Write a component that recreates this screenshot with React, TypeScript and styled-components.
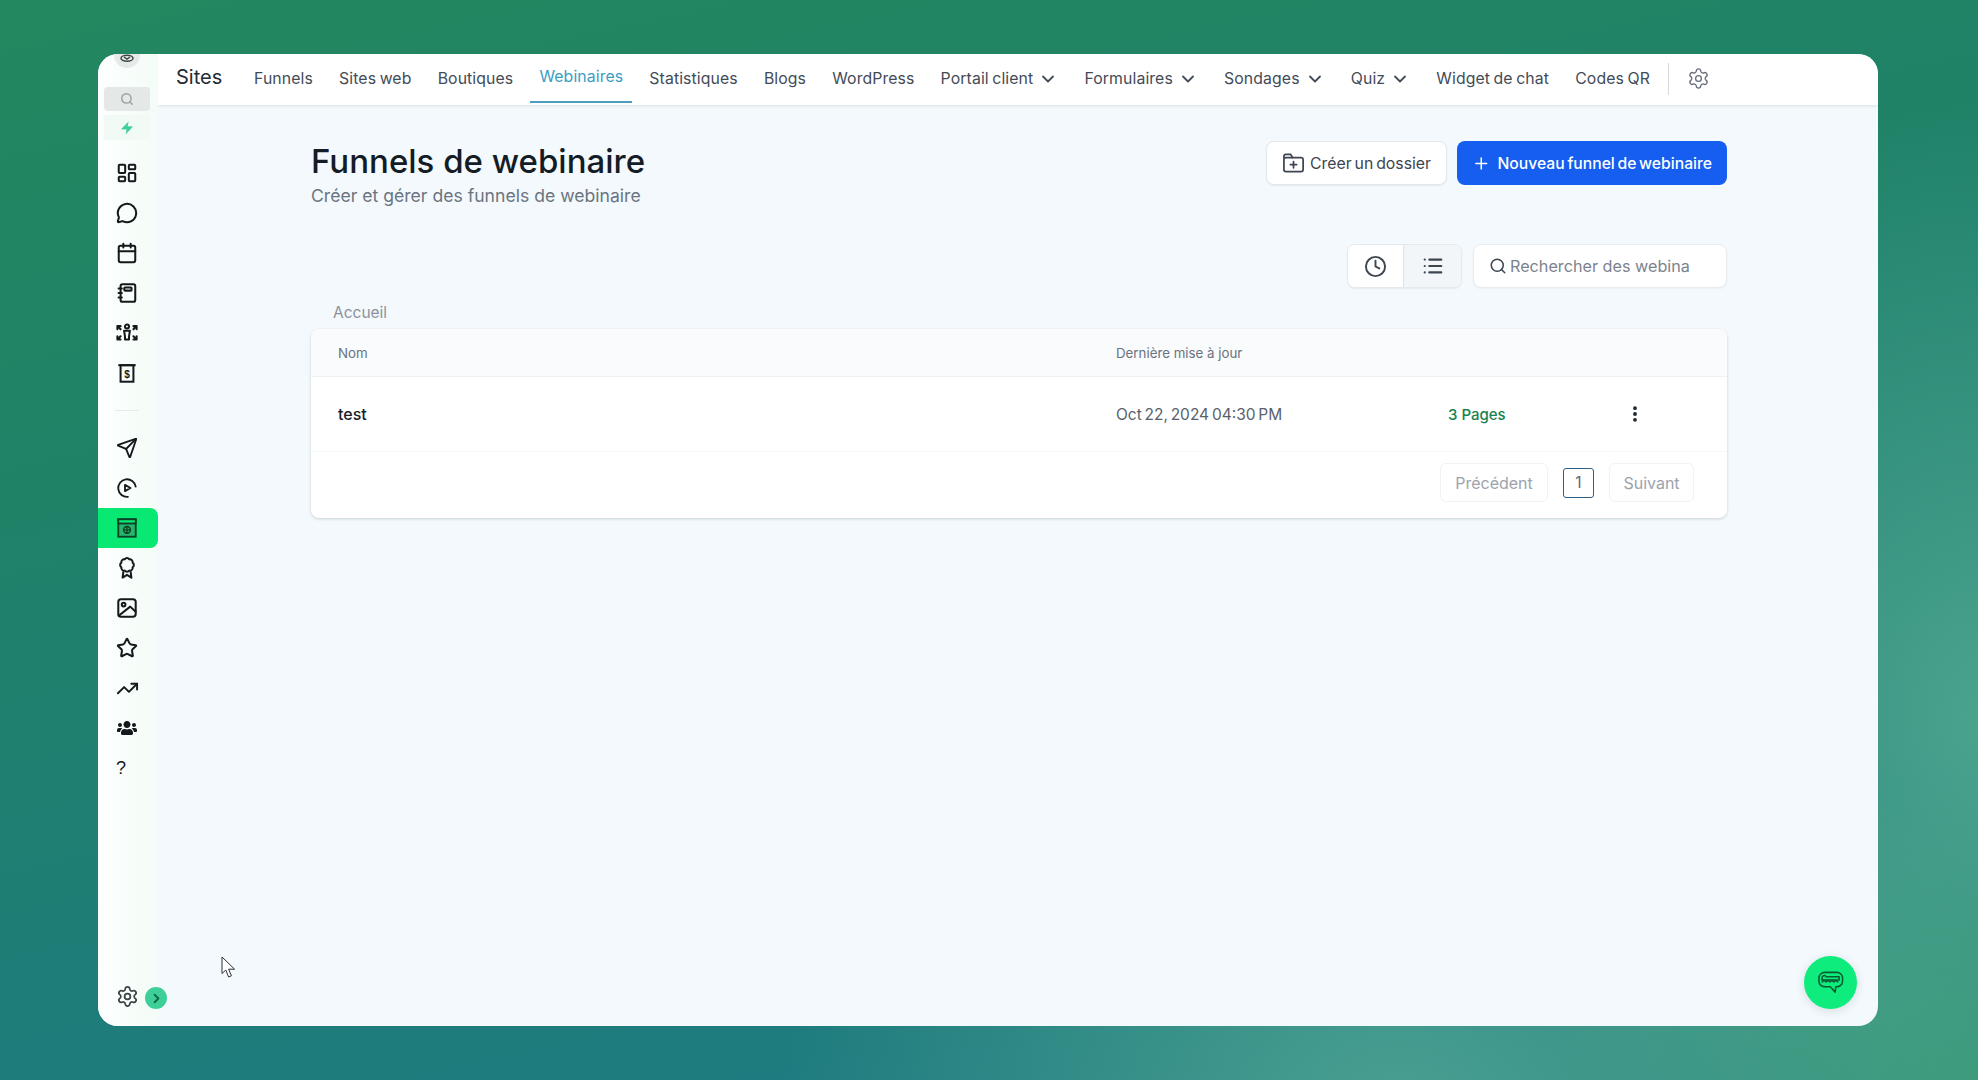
import React from "react";
import styled, { createGlobalStyle } from "styled-components";
import {
  Calendar,
  ChevronDown,
  ChevronRight,
  Clock,
  EllipsisVertical,
  LayoutDashboard,
  List,
  MessageCircle,
  Plus,
  Search,
  Send,
  Settings,
  Star,
  TrendingUp,
} from "lucide-react";
import { FaUsers } from "react-icons/fa";

const Global = createGlobalStyle`
  html, body { margin: 0; padding: 0; }
  body { font-family: "Inter", "Liberation Sans", sans-serif; }
  * { box-sizing: border-box; }
`;

const Page = styled.div`
  width: 1978px;
  height: 1080px;
  padding: 54px 100px 54px 98px;
  overflow: hidden;
  background:
    radial-gradient(ellipse 620px 520px at 1400px 1120px, rgba(110, 190, 155, 0.55), transparent 100%),
    radial-gradient(ellipse 500px 620px at 1990px 720px, rgba(105, 190, 150, 0.6), transparent 100%),
    radial-gradient(ellipse 500px 300px at 1978px 1080px, rgba(50, 150, 105, 0.7), transparent 100%),
    linear-gradient(168deg, #23875f 0%, #1f8268 35%, #1e7c7c 75%, #1f7a86 100%);
`;

const Window = styled.div`
  position: relative;
  display: flex;
  width: 1780px;
  height: 972px;
  border-radius: 20px;
  overflow: hidden;
  background: #f3f9fc;
`;

const Sidebar = styled.aside`
  position: relative;
  z-index: 2;
  display: flex;
  flex-direction: column;
  align-items: center;
  flex: 0 0 60px;
  background: linear-gradient(90deg, #fdfffe 0%, #f3fcf7 100%);
`;

const Avatar = styled.div`
  display: flex;
  align-items: flex-end;
  justify-content: center;
  width: 26px;
  height: 26px;
  margin: -12px 2px 0 0;
  padding-bottom: 6px;
  border-radius: 50%;
  background: #e6e9e7;
  color: #3c4a45;
`;

const SearchChip = styled.div`
  display: flex;
  align-items: center;
  justify-content: center;
  width: 46px;
  height: 24px;
  margin: 19px 2px 0 0;
  border-radius: 4px;
  background: #e4e8e6;
  color: #9aa2a0;
`;

const BoltChip = styled.div`
  display: flex;
  align-items: center;
  justify-content: center;
  width: 46px;
  height: 25px;
  margin: 4px 2px 0 0;
  background: #f1faf5;
`;

const IconGroup = styled.div<{ $flush?: boolean }>`
  display: flex;
  flex-direction: column;
  width: 100%;
  margin-top: ${(p) => (p.$flush ? "0" : "13px")};
`;

const IconCell = styled.div<{ $active?: boolean }>`
  display: flex;
  align-items: center;
  justify-content: center;
  width: 100%;
  height: 40px;
  padding-right: 2px;
  border-radius: 0 8px 8px 0;
  color: ${(p) => (p.$active ? "#0b4d2c" : "#15191c")};
  background: ${(p) => (p.$active ? "#0ae874" : "transparent")};
`;

const HelpCell = styled(IconCell)`
  justify-content: flex-start;
  padding-left: 18px;
  font-size: 18px;
  font-weight: 500;
  font-family: "Liberation Sans", sans-serif;
`;

const Rule = styled.hr`
  width: 24px;
  height: 1px;
  margin: 17px 2px 17px 0;
  border: 0;
  background: #e6ece8;
`;

const SideFooter = styled.div`
  display: flex;
  align-items: center;
  justify-content: center;
  width: 100%;
  margin-top: auto;
  margin-bottom: 18px;
  padding-right: 2px;
  color: #3b4246;
`;

const ExpandBadge = styled.div`
  position: absolute;
  left: 47px;
  bottom: 17px;
  display: flex;
  align-items: center;
  justify-content: center;
  width: 22px;
  height: 22px;
  border-radius: 50%;
  background: #3ecf99;
  color: #0c6b45;
`;

const Column = styled.div`
  display: flex;
  flex-direction: column;
  flex: 1;
  min-width: 0;
`;

const TopBar = styled.header`
  display: flex;
  align-items: center;
  flex: 0 0 51px;
  padding: 0 0 2px 18px;
  background: #ffffff;
  box-shadow: 0 1px 3px rgba(60, 90, 90, 0.14);
`;

const Brand = styled.div`
  width: 69px;
  margin-bottom: 3px;
  font-size: 20px;
  color: #222a33;
`;

const Nav = styled.nav`
  display: flex;
  align-items: stretch;
  align-self: stretch;
  gap: 8.2px;
`;

const NavItem = styled.a<{ $active?: boolean }>`
  display: flex;
  align-items: center;
  gap: 5px;
  padding: 0 9px ${(p) => (p.$active ? "3px" : "0")};
  font-size: 15.8px;
  letter-spacing: 0.1px;
  word-spacing: -1px;
  white-space: nowrap;
  color: ${(p) => (p.$active ? "#3a9dbf" : "#434b57")};
  border-bottom: ${(p) => (p.$active ? "2px solid #4d9dbd" : "0")};
`;

const BarDivider = styled.div`
  width: 1px;
  height: 32px;
  margin: 0 18px 0 9px;
  background: #d6dade;
`;

const BarGear = styled.div`
  display: flex;
  color: #666d78;
`;

const Main = styled.main`
  flex: 1;
  padding: 36px 151px 0 153px;
`;

const Head = styled.div`
  display: flex;
  justify-content: space-between;
  align-items: flex-start;
`;

const Title = styled.h1`
  margin: 0;
  font-size: 33px;
  line-height: 40px;
  font-weight: 500;
  color: #141c26;
`;

const Subtitle = styled.p`
  margin: 4px 0 0;
  font-size: 17.6px;
  line-height: 22px;
  color: #6b7480;
`;

const HeadActions = styled.div`
  display: flex;
  gap: 10px;
`;

const GhostButton = styled.button`
  display: flex;
  align-items: center;
  gap: 5px;
  height: 44px;
  width: 181px;
  padding: 0 15px;
  border: 1px solid #e3e7ea;
  border-radius: 8px;
  background: #fff;
  box-shadow: 0 1px 2px rgba(20, 30, 40, 0.06);
  font: inherit;
  font-size: 15.8px;
  word-spacing: -1.5px;
  white-space: nowrap;
  color: #3d4550;
`;

const PrimaryButton = styled.button`
  display: flex;
  align-items: center;
  gap: 7px;
  height: 44px;
  width: 270px;
  padding: 0 15px;
  border: 0;
  border-radius: 8px;
  background: #155eef;
  font: inherit;
  font-size: 15.7px;
  font-weight: 500;
  word-spacing: -1.5px;
  white-space: nowrap;
  color: #fff;
`;

const Toolbar = styled.div`
  display: flex;
  justify-content: flex-end;
  gap: 11px;
  margin-top: 37px;
`;

const Toggle = styled.div`
  display: flex;
  width: 115px;
  height: 44px;
  border: 1px solid #e6e9ec;
  border-radius: 8px;
  overflow: hidden;
  background: #fff;
  box-shadow: 0 1px 2px rgba(20, 30, 40, 0.06);
`;

const ToggleCell = styled.div<{ $on?: boolean }>`
  display: flex;
  align-items: center;
  justify-content: center;
  flex: ${(p) => (p.$on ? "1" : "0 0 55px")};
  color: #3d4550;
  background: ${(p) => (p.$on ? "#f2f6f8" : "#fff")};
  & + & {
    border-left: 1px solid #dfe3e6;
  }
`;

const SearchBox = styled.div`
  display: flex;
  align-items: center;
  gap: 3px;
  width: 254px;
  height: 44px;
  padding: 0 36px 0 15px;
  border: 1px solid #e9ecef;
  border-radius: 8px;
  background: #fff;
  color: #3d4550;
  box-shadow: 0 1px 2px rgba(20, 30, 40, 0.04);
`;

const SearchText = styled.span`
  flex: 1;
  overflow: hidden;
  white-space: nowrap;
  font-size: 16.2px;
  color: #7c838d;
`;

const Crumb = styled.div`
  margin: 15px 0 6px 22px;
  font-size: 15.5px;
  line-height: 20px;
  color: #8b929b;
`;

const Card = styled.section`
  height: 189px;
  border-radius: 8px;
  background: #fff;
  box-shadow: 0 1px 3px rgba(30, 50, 60, 0.2);
  overflow: hidden;
`;

const Grid = styled.div`
  display: grid;
  grid-template-columns: 778px 332px 186px 1fr;
  align-items: center;
  padding-left: 27px;
`;

const HeaderRow = styled(Grid)`
  height: 48px;
  background: #f9fbfc;
  border-bottom: 1px solid #eef1f3;
  font-size: 13.3px;
  font-weight: 400;
  color: #6b7280;
`;

const BodyRow = styled(Grid)`
  height: 75px;
  border-bottom: 1px solid #f7f8f9;
  font-size: 15.5px;
`;

const NameCell = styled.span`
  font-size: 16px;
  font-weight: 500;
  color: #1a2029;
`;

const DateCell = styled.span`
  word-spacing: -1.6px;
  color: #59616c;
`;

const PagesCell = styled.span`
  color: #17824f;
  font-weight: 500;
  font-size: 15px;
`;

const DotsCell = styled.span`
  display: flex;
  margin-left: -9px;
  color: #1c232b;
`;

const Pager = styled.div`
  display: flex;
  justify-content: flex-end;
  align-items: center;
  gap: 15px;
  padding: 11px 33px 0 0;
`;

const PagerButton = styled.div<{ $w: number }>`
  display: flex;
  align-items: center;
  justify-content: center;
  width: ${(p) => p.$w}px;
  height: 39px;
  border: 1px solid #f0f2f4;
  border-radius: 6px;
  font-size: 16px;
  color: #9ca3ad;
`;

const PagerCurrent = styled.div`
  display: flex;
  align-items: center;
  justify-content: center;
  width: 31px;
  height: 30px;
  border: 1px solid #2f5f87;
  border-radius: 3px;
  font-size: 15.5px;
  color: #5d6a78;
`;

const ChatBubble = styled.div`
  position: absolute;
  right: 21px;
  bottom: 17px;
  display: flex;
  align-items: center;
  justify-content: center;
  width: 53px;
  height: 53px;
  border-radius: 50%;
  background: #0dec7c;
  color: #0a5a32;
  box-shadow: 0 2px 10px rgba(40, 60, 60, 0.14);
`;

const Pointer = styled.div`
  position: absolute;
  left: 123px;
  top: 902px;
  display: flex;
`;

const Ico = ({ children, size = 22, sw = 2 }: { children: React.ReactNode; size?: number; sw?: number }) => (
  <svg width={size} height={size} viewBox="0 0 24 24" fill="none" stroke="currentColor" strokeWidth={sw} strokeLinecap="round" strokeLinejoin="round">
    {children}
  </svg>
);

const Bolt = () => (
  <svg width="14" height="14" viewBox="0 0 14 14">
    <path d="M8.6 0.5 L7.6 5.2 L13 5.6 L5.6 13.5 L6.6 8.6 L1 8.2 Z" fill="#3ecf9f" />
  </svg>
);

const Notebook = () => (
  <Ico sw={2.2}>
    <rect x="5" y="2.5" width="16" height="19" rx="2" />
    <rect x="9" y="6" width="8" height="3.4" rx="1" />
    <path d="M2.8 7h3.6M2.8 12h3.6M2.8 17h3.6" />
  </Ico>
);

const Contacts = () => (
  <Ico sw={2.2}>
    <circle cx="12" cy="5" r="2.2" />
    <path d="M8.8 9.5h6.4l-1 6.2v3.5h-4.4v-3.5z" />
    <path d="M1.5 8V4.5H5M1.5 4.5l3.5 3.5M22.5 8V4.5H19M22.5 4.5L19 8M1.5 15.5V19H5M1.5 19l3.5-3.5M22.5 15.5V19H19M22.5 19L19 15.5" />
  </Ico>
);

const FunnelBill = () => (
  <svg width="22" height="22" viewBox="0 0 24 24" fill="none" stroke="currentColor" strokeWidth="2.2">
    <path d="M2.5 3.5h19" />
    <rect x="5" y="3.5" width="14" height="18" />
    <text x="12" y="17" textAnchor="middle" fontSize="11" fontWeight="700" fontFamily="Liberation Sans, sans-serif" fill="currentColor" stroke="none">$</text>
  </svg>
);

const PlayRing = () => (
  <Ico sw={2}>
    <path d="M21.5 10.5A9.6 9.6 0 1 0 13 21.6" />
    <path d="M9.8 8.6l6 3.4-6 3.4z" />
  </Ico>
);

const SiteWindow = () => (
  <svg width="22" height="22" viewBox="0 0 24 24" fill="none" stroke="#0c3f25" strokeWidth="2">
    <rect x="2.5" y="2.5" width="19" height="19" fill="#27b56b" />
    <rect x="2.5" y="2.5" width="19" height="4.6" fill="#0ae874" />
    <circle cx="12" cy="14" r="3.7" strokeWidth="1.6" />
    <path d="M8.3 14h7.4M12 10.3v7.4" strokeWidth="1.4" />
  </svg>
);

const Ribbon = () => (
  <Ico sw={2.2}>
    <path
      transform="translate(3 -.3) scale(.75)"
      strokeWidth="2.9"
      d="M3.85 8.62a4 4 0 0 1 4.78-4.77 4 4 0 0 1 6.74 0 4 4 0 0 1 4.78 4.78 4 4 0 0 1 0 6.74 4 4 0 0 1-4.77 4.78 4 4 0 0 1-6.75 0 4 4 0 0 1-4.78-4.77 4 4 0 0 1 0-6.76Z"
    />
    <path d="M8 16.5L7.2 22.5l4.8-3 4.8 3L16 16.5" />
  </Ico>
);

const Picture = () => (
  <Ico sw={2.2}>
    <rect x="2.5" y="2.5" width="19" height="19" rx="3" />
    <circle cx="8.3" cy="8.3" r="2" />
    <path d="M3 20.5L15.5 10.5l6 5.5" />
  </Ico>
);

const FolderAdd = () => (
  <Ico size={24} sw={1.8}>
    <path d="M2 6.5V5a2 2 0 0 1 2-2h5l2 3.5" />
    <rect x="2" y="6.5" width="20" height="14.5" rx="2.2" />
    <path d="M12 10.5v6.5M8.8 13.7h6.4" />
  </Ico>
);

const Croc = () => (
  <svg width="27" height="27" viewBox="0 0 28 28" fill="none" stroke="currentColor" strokeWidth="1.6" strokeLinejoin="round" strokeLinecap="round">
    <path d="M8 3.5h12.5a6 6 0 0 1 6 6v3a6 6 0 0 1-6 6h-1l-.7 5.5-5-5.5H8a6 6 0 0 1-6-6v-3a6 6 0 0 1 6-6z" />
    <path d="M5.5 8a2.2 2.2 0 0 1 4 0h13.5v3.5H5z" />
    <path d="M5.5 13.5l2-1.8 2 1.8 2-1.8 2 1.8 2-1.8 2 1.8 2-1.8 2 1.8" />
  </svg>
);

const Arrow = () => (
  <svg width="16" height="23" viewBox="0 0 16 23">
    <path d="M1 1L1 17.5 4.8 14 7.6 21 10.4 19.8 7.6 13.2 13.6 13.2Z" fill="#ffffff" stroke="#2b3036" strokeWidth="1" strokeLinejoin="miter" />
  </svg>
);

const tabs: { label: string; active?: boolean; menu?: boolean }[] = [
  { label: "Funnels" },
  { label: "Sites web" },
  { label: "Boutiques" },
  { label: "Webinaires", active: true },
  { label: "Statistiques" },
  { label: "Blogs" },
  { label: "WordPress" },
  { label: "Portail client", menu: true },
  { label: "Formulaires", menu: true },
  { label: "Sondages", menu: true },
  { label: "Quiz", menu: true },
  { label: "Widget de chat" },
  { label: "Codes QR" },
];

export default function App() {
  return (
    <Page>
      <Global />
      <Window>
        <Sidebar>
          <Avatar>
            <svg width="14" height="8" viewBox="0 0 14 8" fill="none" stroke="currentColor" strokeWidth="1.5">
              <ellipse cx="7" cy="4.2" rx="6" ry="3" />
              <path d="M4 3l3 2 3-2" />
            </svg>
          </Avatar>
          <SearchChip>
            <Search size={14} strokeWidth={2.4} />
          </SearchChip>
          <BoltChip>
            <Bolt />
          </BoltChip>
          <IconGroup>
            <IconCell><LayoutDashboard size={22} strokeWidth={2.2} /></IconCell>
            <IconCell><MessageCircle size={22} strokeWidth={2.2} /></IconCell>
            <IconCell><Calendar size={22} strokeWidth={2.2} /></IconCell>
            <IconCell><Notebook /></IconCell>
            <IconCell><Contacts /></IconCell>
            <IconCell><FunnelBill /></IconCell>
          </IconGroup>
          <Rule />
          <IconGroup $flush>
            <IconCell><Send size={22} strokeWidth={2} /></IconCell>
            <IconCell><PlayRing /></IconCell>
            <IconCell $active><SiteWindow /></IconCell>
            <IconCell><Ribbon /></IconCell>
            <IconCell><Picture /></IconCell>
            <IconCell><Star size={22} strokeWidth={2.2} /></IconCell>
            <IconCell><TrendingUp size={23} strokeWidth={2} /></IconCell>
            <IconCell><FaUsers size={20} /></IconCell>
            <HelpCell>?</HelpCell>
          </IconGroup>
          <SideFooter>
            <Settings size={23} strokeWidth={1.8} />
          </SideFooter>
          <ExpandBadge>
            <ChevronRight size={15} strokeWidth={3} />
          </ExpandBadge>
        </Sidebar>
        <Column>
          <TopBar>
            <Brand>Sites</Brand>
            <Nav>
              {tabs.map((t) => (
                <NavItem key={t.label} $active={t.active}>
                  {t.label}
                  {t.menu && <ChevronDown size={20} strokeWidth={2.2} />}
                </NavItem>
              ))}
            </Nav>
            <BarDivider />
            <BarGear>
              <Settings size={23} strokeWidth={1.4} />
            </BarGear>
          </TopBar>
          <Main>
            <Head>
              <div>
                <Title>Funnels de webinaire</Title>
                <Subtitle>Créer et gérer des funnels de webinaire</Subtitle>
              </div>
              <HeadActions>
                <GhostButton><FolderAdd />Créer un dossier</GhostButton>
                <PrimaryButton><Plus size={21} strokeWidth={2} />Nouveau funnel de webinaire</PrimaryButton>
              </HeadActions>
            </Head>
            <Toolbar>
              <Toggle>
                <ToggleCell><Clock size={23} strokeWidth={2} /></ToggleCell>
                <ToggleCell $on><List size={22} strokeWidth={2.4} /></ToggleCell>
              </Toggle>
              <SearchBox>
                <Search size={18} strokeWidth={2} />
                <SearchText>Rechercher des webinaires</SearchText>
              </SearchBox>
            </Toolbar>
            <Crumb>Accueil</Crumb>
            <Card>
              <HeaderRow>
                <span>Nom</span>
                <span>Dernière mise à jour</span>
              </HeaderRow>
              <BodyRow>
                <NameCell>test</NameCell>
                <DateCell>Oct 22, 2024 04:30 PM</DateCell>
                <PagesCell>3 Pages</PagesCell>
                <DotsCell><EllipsisVertical size={20} strokeWidth={2.6} /></DotsCell>
              </BodyRow>
              <Pager>
                <PagerButton $w={108}>Précédent</PagerButton>
                <PagerCurrent>1</PagerCurrent>
                <PagerButton $w={85}>Suivant</PagerButton>
              </Pager>
            </Card>
          </Main>
        </Column>
        <Pointer><Arrow /></Pointer>
        <ChatBubble><Croc /></ChatBubble>
      </Window>
    </Page>
  );
}
